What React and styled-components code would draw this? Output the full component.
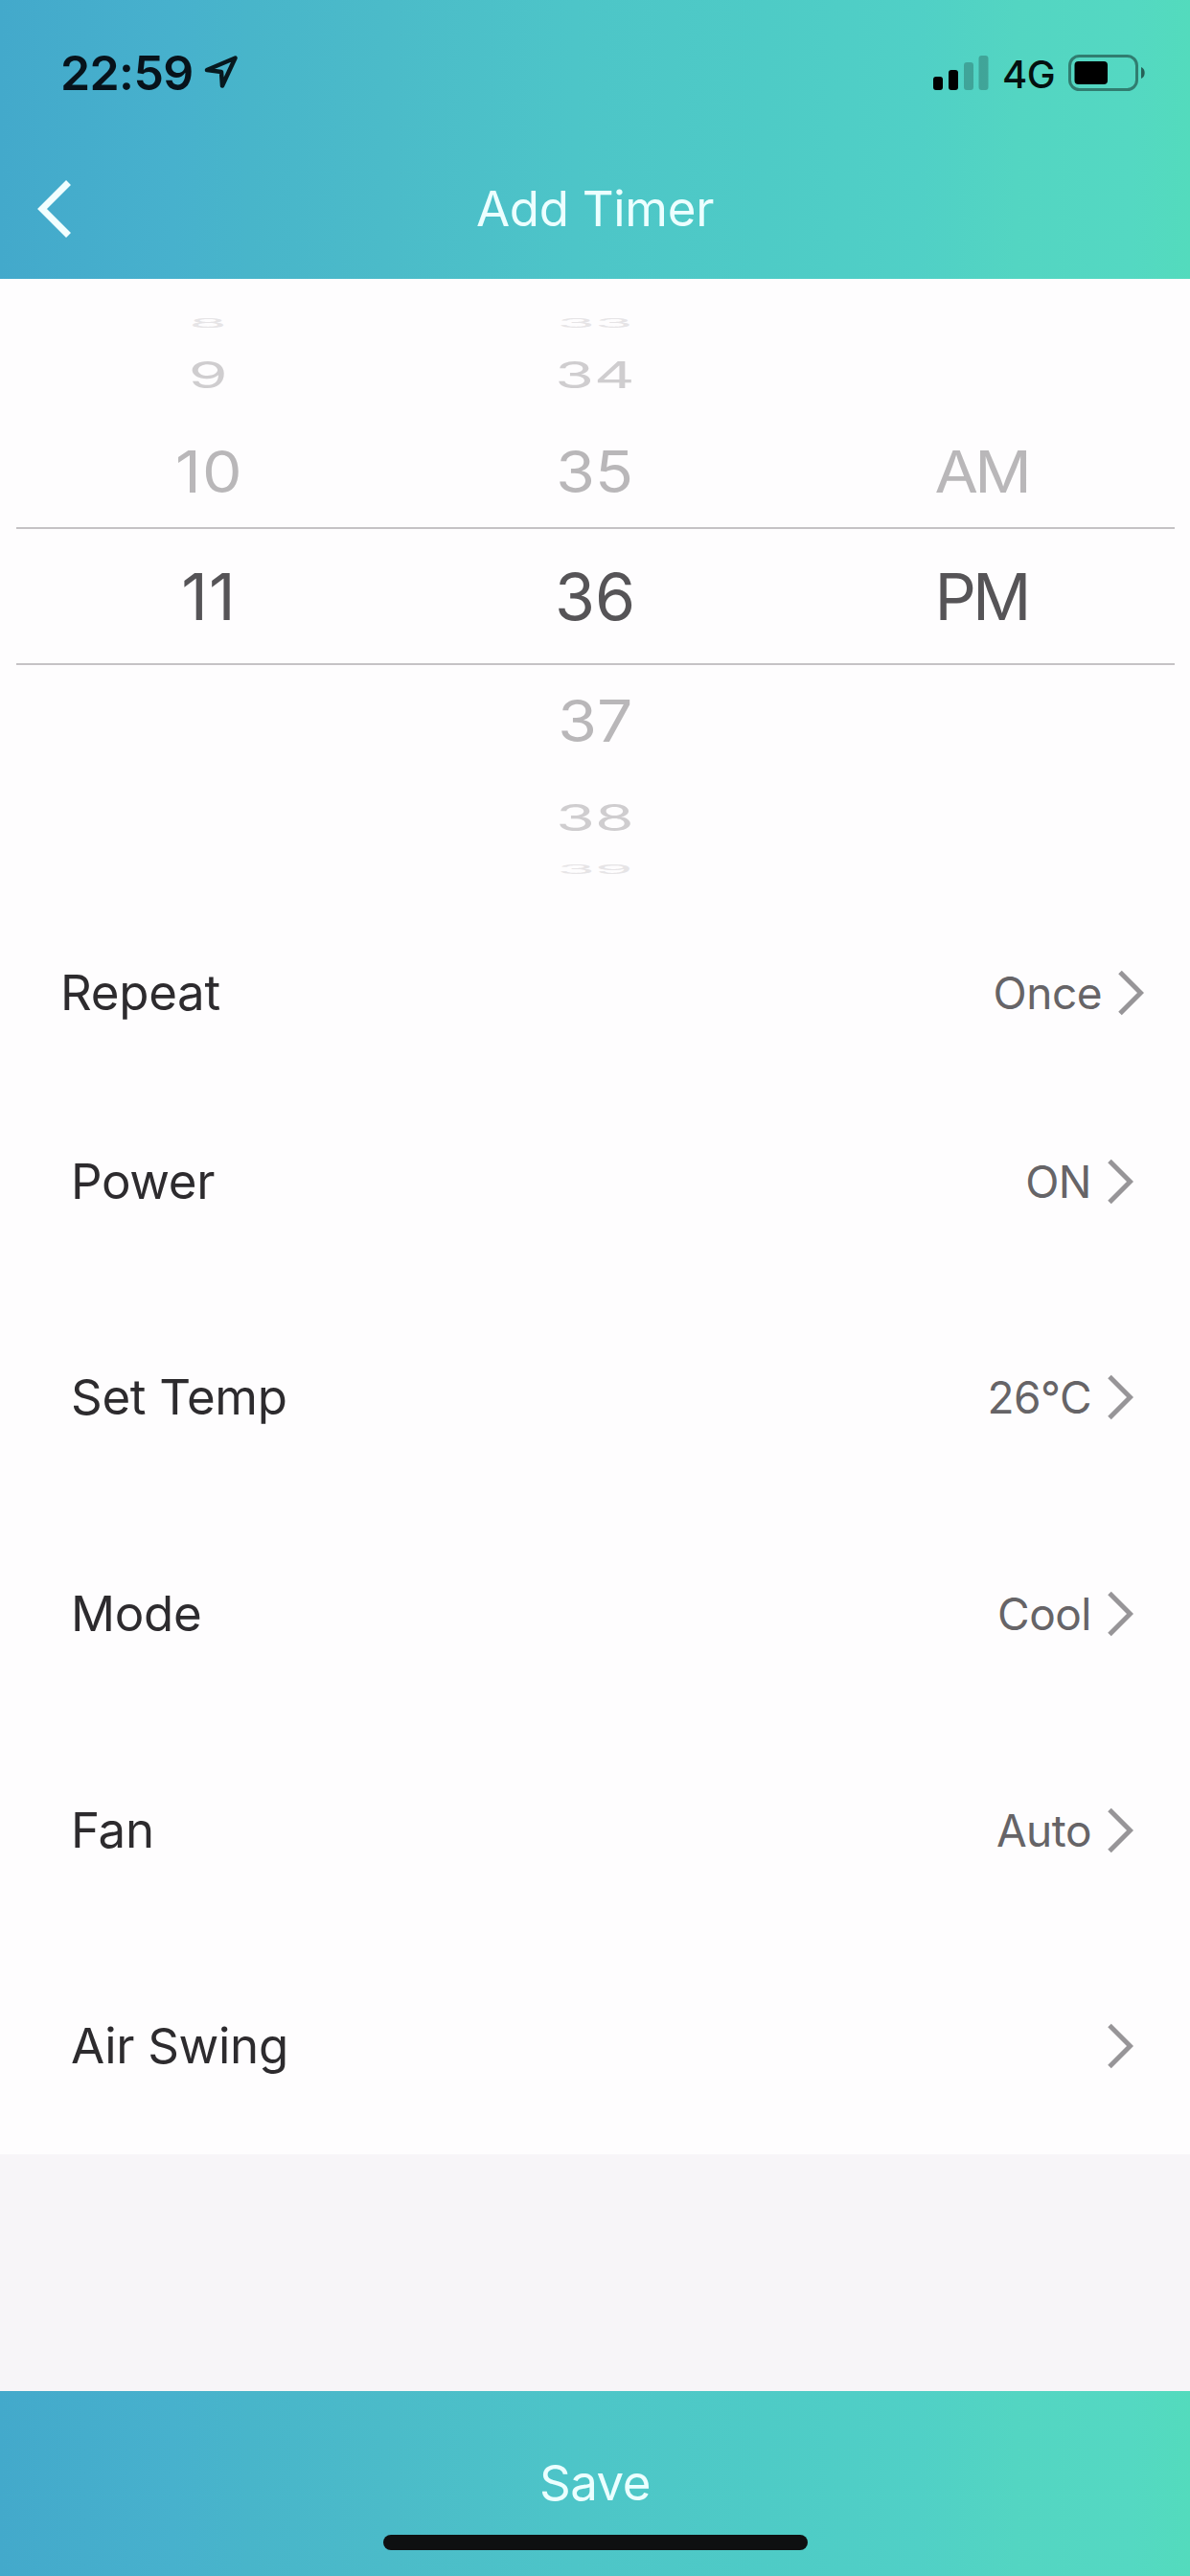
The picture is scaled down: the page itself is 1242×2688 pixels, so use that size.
import React, { useState } from 'react';
import styled, { createGlobalStyle } from 'styled-components';

const hours = ['8', '9', '10', '11', '', '', ''];
const minutes = ['33', '34', '35', '36', '37', '38', '39'];
const periods = ['', '', 'AM', 'PM', '', '', ''];

const settings = [
  { label: 'Power', value: 'ON' },
  { label: 'Set Temp', value: '26°C' },
  { label: 'Mode', value: 'Cool' },
  { label: 'Fan', value: 'Auto' },
  { label: 'Air Swing', value: '' },
];

// height, scale and colour of each wheel row, by distance from the middle
const wheel = [
  { height: 142, x: 1, y: 1, color: '#565457' },
  { height: 118, x: 0.97, y: 0.88, color: '#b9b7b9' },
  { height: 84, x: 0.97, y: 0.57, color: '#cfcdcf' },
  { height: 24, x: 0.94, y: 0.2, color: '#e6e4e6' },
];

function Chevron() {
  return (
    <ChevronIcon viewBox="0 0 27 48">
      <path d="M2 2.5 L23.5 24 L2 45.5" />
    </ChevronIcon>
  );
}

function StatusIcons() {
  return (
    <StatusRight>
      <SignalIcon viewBox="0 0 58 36">
        <rect x="0" y="22" width="10" height="14" rx="3" />
        <rect x="16" y="15" width="10" height="21" rx="3" />
        <rect x="32" y="7" width="10" height="29" rx="3" opacity="0.22" />
        <rect x="47.5" y="0" width="10" height="36" rx="3" opacity="0.22" />
      </SignalIcon>
      <Network>4G</Network>
      <BatteryIcon viewBox="0 0 82 38">
        <rect
          x="1.5"
          y="1.5"
          width="70"
          height="35"
          rx="10"
          fill="none"
          stroke="#000"
          strokeWidth="3"
          opacity="0.42"
        />
        <rect x="6.5" y="7" width="34.5" height="24" rx="4" />
        <path d="M76 13 a6 6.5 0 0 1 0 12 z" opacity="0.55" />
      </BatteryIcon>
    </StatusRight>
  );
}

function Wheel({ items, spacing = 0 }) {
  return (
    <WheelColumn>
      {items.map((item, i) => (
        <WheelItem key={i} $look={wheel[Math.abs(i - 3)]}>
          <WheelText $look={wheel[Math.abs(i - 3)]} $spacing={spacing}>
            {item}
          </WheelText>
        </WheelItem>
      ))}
    </WheelColumn>
  );
}

function App() {
  const [repeat] = useState('Once');

  return (
    <Screen>
      <GlobalStyle />
      <Header>
        <StatusBar>
          <Clock>22:59</Clock>
          <LocationIcon viewBox="0 0 36 36">
            <path d="M32.5 2.5 L19 31.5 L18 17 L3 15 Z" />
          </LocationIcon>
          <StatusIcons />
        </StatusBar>
        <NavBar>
          <BackButton type="button">
            <BackIcon viewBox="0 0 36 62">
              <path d="M32.5 3.5 L5 31 L32.5 58.5" />
            </BackIcon>
          </BackButton>
          <Title>Add Timer</Title>
        </NavBar>
      </Header>
      <Picker>
        <Wheel items={hours} spacing={1} />
        <Wheel items={minutes} />
        <Wheel items={periods} spacing={-4} />
        <Selection />
      </Picker>
      <RepeatRow>
        <Label>Repeat</Label>
        <Value>{repeat}</Value>
        <Chevron />
      </RepeatRow>
      <SettingList>
        {settings.map((item) => (
          <SettingRow key={item.label}>
            <Label>{item.label}</Label>
            <Value>{item.value}</Value>
            <Chevron />
          </SettingRow>
        ))}
      </SettingList>
      <Spacer />
      <SaveBar>
        <SaveButton type="button">Save</SaveButton>
        <HomeIndicator />
      </SaveBar>
    </Screen>
  );
}

export default App;

const GlobalStyle = createGlobalStyle`
  * {
    box-sizing: border-box;
  }
  body {
    margin: 0;
    font-family: Inter, "Liberation Sans", sans-serif;
  }
  button {
    padding: 0;
    border: none;
    background: transparent;
    font-family: inherit;
    cursor: pointer;
  }
`;

const gradient = `linear-gradient(
  90deg,
  #43a9cb 0px,
  #47b1cd 180px,
  #48b5ca 260px,
  #4bbbc9 400px,
  #4dc5c8 600px,
  #4ecbc6 800px,
  #50d0c6 960px,
  #53d5c2 1060px,
  #54d8c2 1180px,
  #53dbbd 1242px
)`;

const Screen = styled.div`
  display: flex;
  flex-direction: column;
  width: 1242px;
  height: 2688px;
  background: #fefdfe;
`;

const Header = styled.header`
  display: flex;
  flex-direction: column;
  height: 291px;
  background: ${gradient};
`;

const StatusBar = styled.div`
  display: flex;
  align-items: center;
  height: 152px;
  padding: 0 45px 0 63px;
`;

const Clock = styled.span`
  width: 150px;
  font-size: 50px;
  font-weight: 600;
  line-height: 60px;
  letter-spacing: -0.6px;
  color: #07121a;
`;

const LocationIcon = styled.svg`
  width: 36px;
  height: 36px;
  fill: none;
  stroke: #07181e;
  stroke-width: 4.5;
  stroke-linejoin: round;
`;

const StatusRight = styled.div`
  display: flex;
  align-items: center;
  margin-left: auto;
`;

const SignalIcon = styled.svg`
  width: 58px;
  height: 36px;
`;

const Network = styled.span`
  width: 69px;
  margin: 3px 0 0 14px;
  font-size: 40px;
  font-weight: 500;
  line-height: 48px;
  letter-spacing: -0.5px;
  color: #04100f;
`;

const BatteryIcon = styled.svg`
  width: 82px;
  height: 38px;
`;

const NavBar = styled.div`
  display: grid;
  grid-template-columns: 120px 1fr 120px;
  align-items: center;
  height: 132px;
`;

const BackButton = styled.button`
  display: flex;
  padding-left: 39px;
`;

const BackIcon = styled.svg`
  width: 36px;
  height: 62px;
  fill: none;
  stroke: #f2ffff;
  stroke-width: 7;
`;

const Title = styled.h1`
  margin: 0;
  font-size: 51px;
  font-weight: 400;
  line-height: 60px;
  letter-spacing: -0.3px;
  text-align: center;
  color: #ecffff;
`;

const Picker = styled.section`
  position: relative;
  display: grid;
  grid-template-columns: repeat(3, 403px);
  justify-content: center;
  height: 661px;
  padding-top: 34px;
`;

const WheelColumn = styled.div`
  display: flex;
  flex-direction: column;
`;

const WheelItem = styled.div`
  display: flex;
  align-items: center;
  justify-content: center;
  height: ${(props) => props.$look.height}px;
`;

const WheelText = styled.span`
  font-size: 68px;
  font-weight: 400;
  line-height: 80px;
  letter-spacing: ${(props) => props.$spacing}px;
  color: ${(props) => props.$look.color};
  transform: scale(${(props) => props.$look.x}, ${(props) => props.$look.y});
`;

// lines over the wheels around the selected row
const Selection = styled.div`
  position: absolute;
  top: 259px;
  left: 17px;
  right: 16px;
  height: 144px;
  border-top: 2px solid #c5c2c5;
  border-bottom: 2px solid #c5c2c5;
`;

const Row = styled.div`
  display: flex;
  align-items: center;
`;

const RepeatRow = styled(Row)`
  height: 168px;
  padding: 0 48px 0 63px;
`;

const SettingList = styled.div`
  display: flex;
  flex-direction: column;
  height: 1128px;
`;

const SettingRow = styled(Row)`
  flex: 1;
  padding: 0 59px 0 74px;
`;

const Label = styled.span`
  flex: 1;
  font-size: 51px;
  line-height: 60px;
  letter-spacing: -0.3px;
  color: #2d2b2e;
`;

const Value = styled.span`
  margin-right: 17px;
  font-size: 46px;
  line-height: 56px;
  letter-spacing: -0.5px;
  color: #666467;
`;

const ChevronIcon = styled.svg`
  width: 27px;
  height: 48px;
  fill: none;
  stroke: #979598;
  stroke-width: 5;
`;

const Spacer = styled.div`
  flex: 1;
  background: #f7f5f8;
`;

const SaveBar = styled.footer`
  display: flex;
  flex-direction: column;
  align-items: center;
  height: 193px;
  padding-top: 66px;
  background: ${gradient};
`;

const SaveButton = styled.button`
  height: 60px;
  font-size: 51px;
  font-weight: 400;
  line-height: 60px;
  letter-spacing: -0.5px;
  color: #ecffff;
`;

const HomeIndicator = styled.div`
  width: 443px;
  height: 16px;
  margin-top: 24px;
  border-radius: 8px;
  background: #0e1011;
`;
